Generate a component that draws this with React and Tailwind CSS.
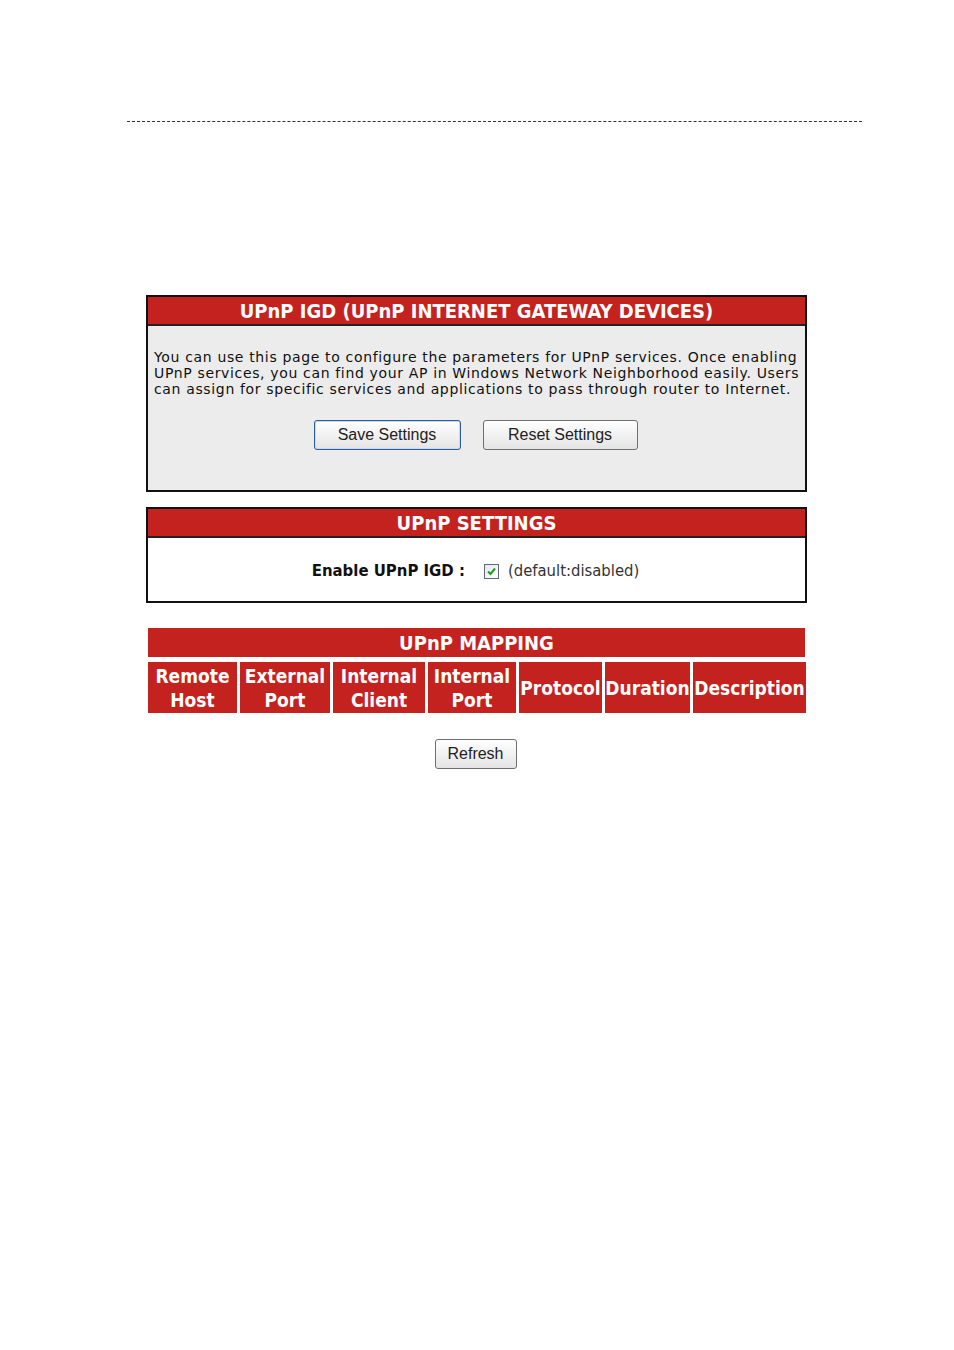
import React from "react";

function Btn({ children, w, focus }) {
  return (
    <button
      className={
        "h-[30px] rounded-[3px] border bg-gradient-to-b from-white to-[#e4e4e4] text-[16px] text-[#222] font-['Liberation_Sans',Arial,sans-serif] leading-none " +
        (focus ? "border-[#2f5d9a] shadow-[inset_0_0_0_1px_#c8d8ef]" : "border-[#6f6f6f]")
      }
      style={{ width: w }}
    >
      {children}
    </button>
  );
}

const hdr = "font-['DejaVu_Sans_Condensed','DejaVu_Sans',sans-serif] font-bold text-white";

export default function App() {
  const cols = [
    ["Remote", "Host"],
    ["External", "Port"],
    ["Internal", "Client"],
    ["Internal", "Port"],
    ["Protocol"],
    ["Duration"],
    ["Description"],
  ];
  return (
    <div className="w-[954px] h-[1350px] bg-white relative">
      <div className="pt-[121px] pl-[127px]">
        <div className="w-[735px] border-t border-dashed border-[#333]" />
      </div>

      <div className="ml-[146px] w-[661px] mt-[173px]">
        {/* Box 1 */}
        <div className="border-2 border-[#111] bg-[#ececec]">
          <div className={"h-[29px] bg-[#c4221f] border-b-2 border-[#222] flex items-center justify-center text-[20px] " + hdr}>
            UPnP IGD (UPnP INTERNET GATEWAY DEVICES)
          </div>
          <div className="pt-[23px] pb-[40px] px-[6px]">
            <p className="text-[14px] tracking-[0.65px] leading-[16px] text-[#111] font-['DejaVu_Sans',Verdana,sans-serif] whitespace-nowrap">
              You can use this page to configure the parameters for UPnP services. Once enabling
              <br />
              UPnP services, you can find your AP in Windows Network Neighborhood easily. Users
              <br />
              can assign for specific services and applications to pass through router to Internet.
            </p>
            <div className="mt-[23px] flex justify-center gap-[22px] pr-[2px]">
              <Btn w={147} focus>Save Settings</Btn>
              <Btn w={155}>Reset Settings</Btn>
            </div>
          </div>
        </div>

        {/* Box 2 */}
        <div className="mt-[15px] border-2 border-[#111] bg-white">
          <div className={"h-[29px] bg-[#c4221f] border-b-2 border-[#222] flex items-center justify-center text-[20px] " + hdr}>
            UPnP SETTINGS
          </div>
          <div className="h-[63px] pt-[3px] flex items-center justify-center pr-[2px]">
            <span className="font-['DejaVu_Sans_Condensed','DejaVu_Sans',sans-serif] font-bold text-[16.6px] text-[#111]">
              Enable UPnP IGD :
            </span>
            <span className="ml-[19px] w-[15px] h-[15px] border border-[#5b6b7b] bg-gradient-to-br from-[#e4e8ec] to-white flex items-center justify-center">
              <svg width="11" height="11" viewBox="0 0 11 11">
                <path d="M2 5.5 L4.5 8 L9 2.5" fill="none" stroke="#1f9a1f" strokeWidth="2" />
              </svg>
            </span>
            <span className="ml-[9px] font-['DejaVu_Sans_Condensed','DejaVu_Sans',sans-serif] text-[16.5px] text-[#333]">
              (default:disabled)
            </span>
          </div>
        </div>

        {/* Mapping */}
        <div className="mt-[25px] px-[2px]">
          <div className={"h-[29px] bg-[#c4221f] flex items-center justify-center text-[20px] " + hdr}>
            UPnP MAPPING
          </div>
          <div className="mt-[5px] grid grid-cols-[89px_90px_92px_88px_83px_85px_113px] gap-x-[3px]">
            {cols.map((c, i) => (
              <div
                key={i}
                className={"h-[51px] bg-[#c4221f] flex flex-col items-center justify-center text-[19px] leading-[24px] whitespace-nowrap " + hdr}
              >
                {c.map((t) => (
                  <span key={t}>{t}</span>
                ))}
              </div>
            ))}
          </div>
        </div>

        <div className="mt-[26px] flex justify-center pr-[2px]">
          <Btn w={82}>Refresh</Btn>
        </div>
      </div>
    </div>
  );
}
